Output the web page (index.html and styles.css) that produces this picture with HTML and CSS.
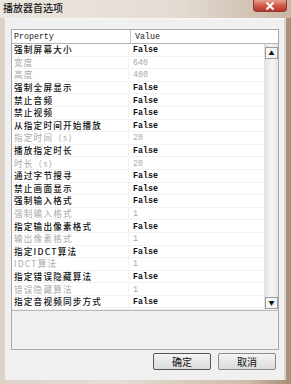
FILE: index.html
```html
<!DOCTYPE html>
<html lang="zh-CN">
<head>
  <meta charset="UTF-8" />
  <title>播放器首选项</title>
  <link rel="stylesheet" href="styles.css">
</head>
<body>
<div class="window">
  <div class="titlebar">
    <span class="title">播放器首选项</span>
    <button class="close">
      <svg width="10" height="8" viewBox="0 0 10 8"><path d="M1.5 0.5 L8.5 7.5 M8.5 0.5 L1.5 7.5" stroke="#fff" stroke-width="2"/></svg>
    </button>
  </div>

  <div class="client">
    <div class="grid">
      <div class="head">
        <span class="col-name">Property</span>
        <span class="col-value">Value</span>
      </div>

      <div class="body">
        <div class="rows">
          <div class="row"><span class="name">强制屏幕大小</span><span class="val set">False</span></div>
          <div class="row dim"><span class="name">宽度</span><span class="val">640</span></div>
          <div class="row dim"><span class="name">高度</span><span class="val">480</span></div>
          <div class="row"><span class="name">强制全屏显示</span><span class="val set">False</span></div>
          <div class="row"><span class="name">禁止音频</span><span class="val set">False</span></div>
          <div class="row"><span class="name">禁止视频</span><span class="val set">False</span></div>
          <div class="row"><span class="name">从指定时间开始播放</span><span class="val set">False</span></div>
          <div class="row dim"><span class="name">指定时间（s）</span><span class="val">20</span></div>
          <div class="row"><span class="name">播放指定时长</span><span class="val set">False</span></div>
          <div class="row dim"><span class="name">时长（s）</span><span class="val">20</span></div>
          <div class="row"><span class="name">通过字节搜寻</span><span class="val set">False</span></div>
          <div class="row"><span class="name">禁止画面显示</span><span class="val set">False</span></div>
          <div class="row"><span class="name">强制输入格式</span><span class="val set">False</span></div>
          <div class="row dim"><span class="name">强制输入格式</span><span class="val">1</span></div>
          <div class="row"><span class="name">指定输出像素格式</span><span class="val set">False</span></div>
          <div class="row dim"><span class="name">输出像素格式</span><span class="val">1</span></div>
          <div class="row"><span class="name">指定IDCT算法</span><span class="val set">False</span></div>
          <div class="row dim"><span class="name">IDCT算法</span><span class="val">1</span></div>
          <div class="row"><span class="name">指定错误隐藏算法</span><span class="val set">False</span></div>
          <div class="row dim"><span class="name">错误隐藏算法</span><span class="val">1</span></div>
          <div class="row"><span class="name">指定音视频同步方式</span><span class="val set">False</span></div>
        </div>
        <div class="scrollbar">
          <div class="arrow up">▲</div>
          <div class="track"></div>
          <div class="arrow down">▼</div>
        </div>
      </div>

      <div class="desc"></div>
    </div>

    <div class="buttons">
      <button class="btn default">确定</button>
      <button class="btn">取消</button>
    </div>
  </div>
</div>
</body>
</html>
```

FILE: styles.css
```css
body {
  margin: 0;
  font-family: "Noto Sans CJK SC", sans-serif;
}
.window {
  width: 291px;
  height: 384px;
  display: flex;
  flex-direction: column;
  background: linear-gradient(to right, #ddd3c8, #e6ddd4 40%, #cdbcaa 85%, #a88d77);
}
.titlebar {
  height: 18px;
  display: flex;
  align-items: flex-start;
  justify-content: space-between;
  background: linear-gradient(to right, #ebe6e0, #e4dcd3 60%, #c9b6a4);
}
.title {
  font-size: 10px;
  font-weight: 500;
  line-height: 16px;
  color: #1a1a1a;
  padding-left: 3px;
}
.close {
  width: 34px;
  height: 12px;
  margin-right: 4px;
  padding: 0;
  border: 1px solid #8e3b30;
  border-top: none;
  border-radius: 0 0 4px 4px;
  background: linear-gradient(#e8a093, #cf5a48 50%, #b8372a);
  display: flex;
  align-items: center;
  justify-content: center;
}

.client {
  flex: 1;
  margin: 0 5px 4px 5px;
  background: #f0f0f0;
  border-top: 1px solid #faf8f6;
  border-right: 2px solid #d8d4d0;
  padding: 10px 5px 0 6px;
  display: flex;
  flex-direction: column;
}
.grid {
  width: 266px;
  border: 1px solid #a9a9a9;
  background: #f0f0f0;
}
.head {
  height: 13px;
  display: flex;
  background: #fff;
  border-bottom: 1px solid #b5b5b5;
  font-family: "Liberation Mono", monospace;
  font-size: 8.3px;
  line-height: 13px;
  color: #222;
}
.col-name {
  width: 116px;
  padding-left: 2px;
  border-right: 1px solid #c8c8c8;
}
.col-value {
  padding-left: 4px;
}
.body {
  display: flex;
  height: 265px;
  background: #fff;
}
.rows {
  width: 253px;
  display: grid;
  grid-auto-rows: 12.6px;
}
.row {
  display: flex;
  align-items: center;
  border-bottom: 1px solid #f2f2f2;
  box-sizing: border-box;
  color: #111;
}
.row .name {
  width: 114px;
  padding-left: 2px;
  white-space: nowrap;
  font-size: 8.6px;
  font-weight: 500;
  letter-spacing: 1.2px;
  line-height: 11px;
  border-right: 1px solid #f2f2f2;
}
.row .val {
  padding-left: 4px;
  font-family: "Liberation Mono", monospace;
  font-size: 8.3px;
  line-height: 11px;
}
.row .val.set {
  font-weight: bold;
}
.row.dim {
  color: #a9a9a9;
}
.row.dim .name {
  font-weight: 400;
}

.scrollbar {
  width: 13px;
  display: flex;
  flex-direction: column;
  padding-top: 3px;
  background: linear-gradient(to right, #e3e3e3, #f4f4f4 50%, #e6e6e6);
  border-left: 1px solid #e0e0e0;
}
.arrow {
  height: 10px;
  border: 1px solid #9c9c9c;
  background: #f4f4f4;
  font-size: 6px;
  line-height: 10px;
  text-align: center;
  color: #111;
}
.track {
  flex: 1;
}
.desc {
  height: 38px;
  margin-top: 1px;
  border-top: 1px solid #b9b9b9;
  background: #f0f0f0;
}

.buttons {
  display: flex;
  justify-content: flex-end;
  gap: 7px;
  margin-top: 3px;
  padding-right: 3px;
}
.btn {
  width: 58px;
  height: 17px;
  padding: 0;
  font-family: "Noto Sans CJK SC", sans-serif;
  font-size: 10px;
  line-height: 15px;
  color: #111;
  border: 1px solid #8a8a8a;
  border-radius: 2px;
  background: linear-gradient(#f6f6f6, #e6e6e6 50%, #dcdcdc);
}
.btn.default {
  border-color: #555;
}
```
